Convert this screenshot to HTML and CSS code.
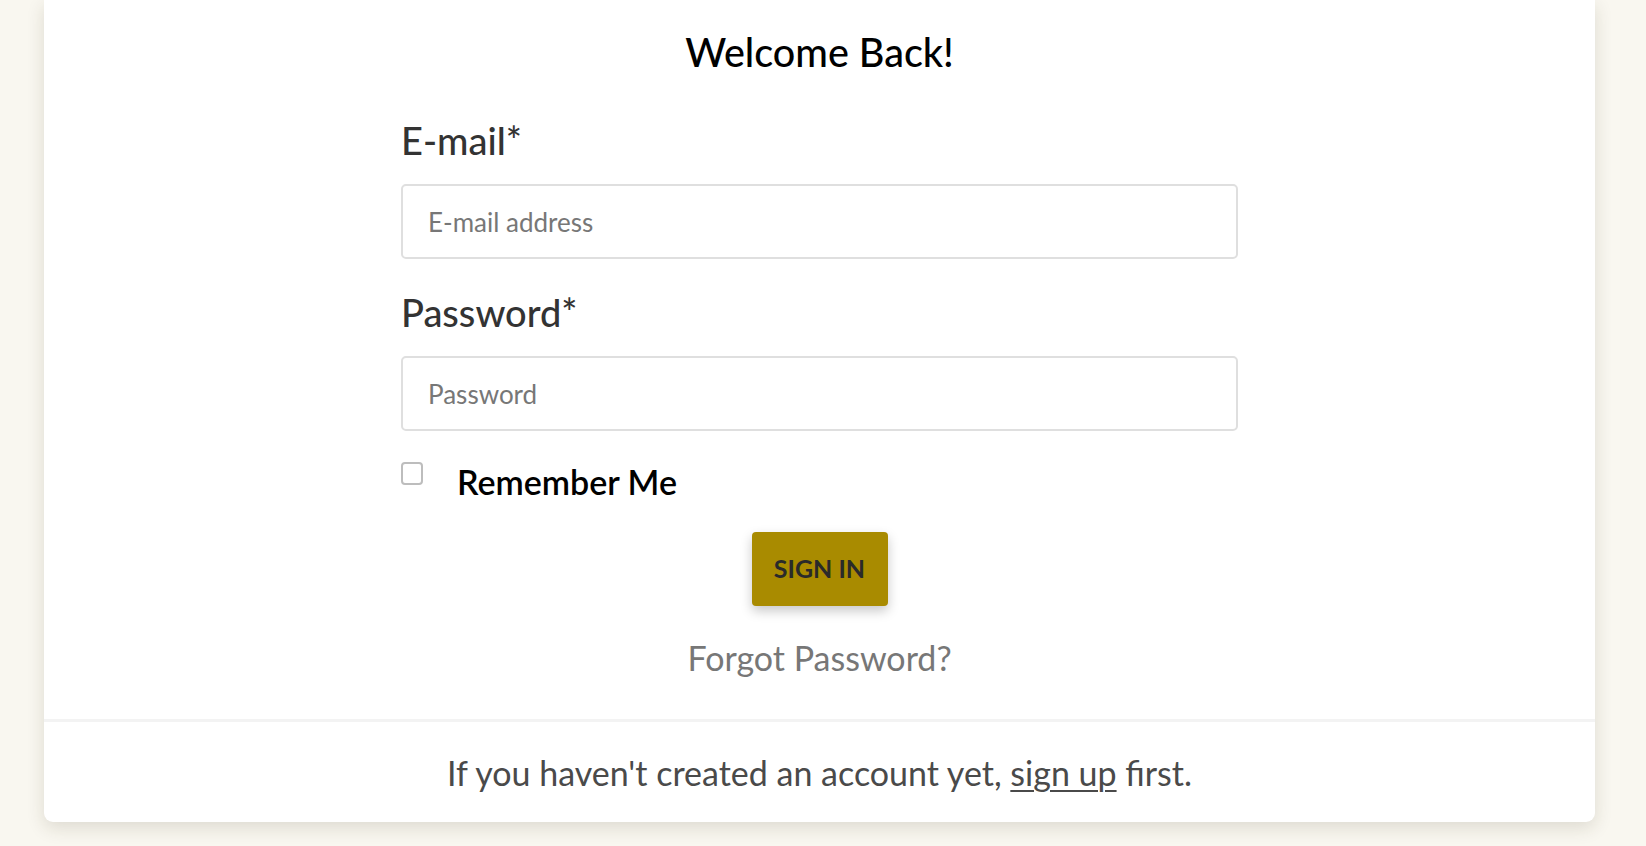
FILE: index.html
```html
<!DOCTYPE html>
<html lang="en">
<head>
<meta charset="utf-8">
<title>Sign In</title>
<link rel="stylesheet" href="styles.css">
</head>
<body>
<main class="page">
  <section class="card">
    <div class="card-body">
      <h1 class="title">Welcome Back!</h1>
      <form class="form">
        <label class="field-label" for="email">E-mail*</label>
        <input class="field-input" id="email" type="email" placeholder="E-mail address">
        <label class="field-label" for="password">Password*</label>
        <input class="field-input" id="password" type="password" placeholder="Password">
        <div class="remember-row">
          <input class="checkbox" id="remember" type="checkbox">
          <label class="remember-label" for="remember">Remember Me</label>
        </div>
        <div class="actions">
          <button class="btn-primary" type="button">SIGN IN</button>
          <a class="forgot" href="#">Forgot Password?</a>
        </div>
      </form>
    </div>
    <div class="card-footer">
      <p class="footer-text">If you haven't created an account yet, <a class="footer-link" href="#">sign up</a> first.</p>
    </div>
  </section>
</main>
</body>
</html>
```

FILE: styles.css
```css
* { box-sizing: border-box; }

html, body {
  margin: 0;
  padding: 0;
  background: #f9f7f0;
  font-family: "Lato", "Open Sans", sans-serif;
}

.page {
  padding: 0 51px 24px 44px;
}

.card {
  width: 1551px;
  background: #ffffff;
  border-radius: 0 0 9px 9px;
  box-shadow: 0 6px 18px rgba(60, 50, 20, 0.14);
  overflow: hidden;
}

.card-body {
  padding: 28px 0 44px;
}

.title {
  margin: 0;
  text-align: center;
  font-size: 39.5px;
  line-height: 48px;
  font-weight: 500;
  color: #000;
}

.form {
  width: 837px;
  margin: 42px auto 0;
  display: flex;
  flex-direction: column;
}

.field-label {
  display: block;
  font-size: 38px;
  line-height: 44px;
  font-weight: 500;
  color: #333;
  margin-bottom: 22px;
}

.field-input {
  display: block;
  width: 100%;
  height: 75px;
  border: 2px solid #dfdfdf;
  border-radius: 5px;
  padding: 0 25px;
  font-family: inherit;
  font-size: 26px;
  color: #333;
  outline: none;
  margin-bottom: 31px;
}

.field-input::placeholder {
  color: #777;
}

.remember-row {
  display: flex;
  align-items: flex-start;
  gap: 34px;
}

.checkbox {
  appearance: none;
  -webkit-appearance: none;
  margin: 0;
  width: 22px;
  height: 23px;
  border: 2px solid #bdbdbd;
  border-radius: 4px;
  background: #fff;
  flex: none;
}

.remember-label {
  margin-top: 2px;
  font-size: 34px;
  line-height: 36px;
  font-weight: 600;
  color: #000;
}

.actions {
  display: flex;
  flex-direction: column;
  align-items: center;
  margin-top: 32px;
}

.btn-primary {
  width: 136px;
  height: 74px;
  border: none;
  border-radius: 4px;
  background: #a98b00;
  color: #2a2a2a;
  font-family: inherit;
  font-size: 25px;
  line-height: 30px;
  font-weight: 700;
  box-shadow: 0 5px 12px rgba(0, 0, 0, 0.22);
  cursor: pointer;
  padding: 0 0 3px;
}

.forgot {
  margin-top: 35px;
  font-size: 34px;
  line-height: 34px;
  color: #777;
  text-decoration: none;
}

.card-footer {
  border-top: 3px solid #f3f3f3;
  padding: 31px 0 29px;
}

.footer-text {
  margin: 0;
  text-align: center;
  font-size: 34px;
  line-height: 40px;
  color: #4a4a4a;
}

.footer-link {
  color: #4a4a4a;
  text-decoration: underline;
  text-decoration-thickness: 2px;
  text-underline-offset: 4px;
}
```
